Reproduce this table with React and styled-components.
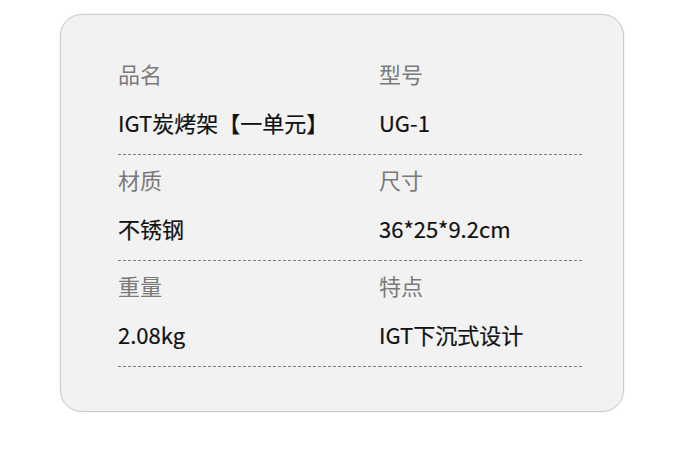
import styled, { createGlobalStyle } from "styled-components";

const specs = [
  { label: "品名", value: "IGT炭烤架【一单元】" },
  { label: "型号", value: "UG-1" },
  { label: "材质", value: "不锈钢" },
  { label: "尺寸", value: "36*25*9.2cm" },
  { label: "重量", value: "2.08kg" },
  { label: "特点", value: "IGT下沉式设计" },
];

export default function App() {
  return (
    <>
      <GlobalStyle />
      <Page>
        <Card>
          <Grid>
            {specs.map((item) => (
              <Cell key={item.label}>
                <Label>{item.label}</Label>
                <Value>{item.value}</Value>
              </Cell>
            ))}
          </Grid>
        </Card>
      </Page>
    </>
  );
}

const GlobalStyle = createGlobalStyle`
  body {
    margin: 0;
    background: #ffffff;
    font-family: "Noto Sans CJK SC", "Noto Sans", sans-serif;
  }
`;

const Page = styled.div`
  width: 686px;
  height: 465px;
  padding: 14px 0 0 60px;
  box-sizing: border-box;
`;

const Card = styled.div`
  width: 564px;
  height: 398px;
  box-sizing: border-box;
  padding: 34px 0 0 57px;
  background: #f2f2f2;
  border: 1px solid #cbcbcb;
  border-radius: 22px;
  box-shadow: 0 0 2px rgba(0, 0, 0, 0.12);
`;

const Grid = styled.div`
  display: grid;
  grid-template-columns: 261px 204px;
`;

const Cell = styled.div`
  position: relative;
  display: flex;
  flex-direction: column;
  gap: 19px;
  height: 106px;
  box-sizing: border-box;
  padding-top: 9px;

  &::after {
    content: "";
    position: absolute;
    left: 0;
    right: 0;
    bottom: 0;
    height: 1px;
    background-image: repeating-linear-gradient(
      to right,
      #7e7e7e 0 3px,
      transparent 3px 5px
    );
  }
`;

const Label = styled.div`
  font-size: 22px;
  line-height: 30px;
  color: #7a7a7a;
`;

const Value = styled.div`
  font-size: 22px;
  line-height: 30px;
  color: #111111;
  -webkit-text-stroke: 0.2px #111111;
`;
